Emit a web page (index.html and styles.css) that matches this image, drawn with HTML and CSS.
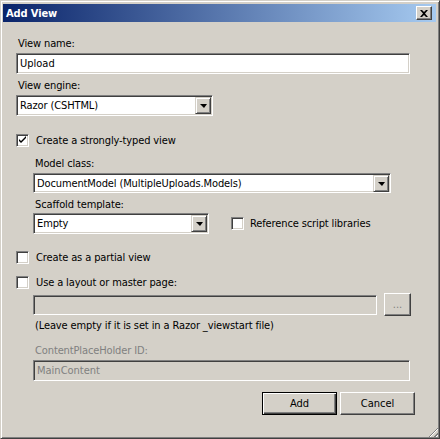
FILE: index.html
```html
<!DOCTYPE html>
<html>
<head>
    <title>Add View</title>
    <link rel="stylesheet" href="styles.css">
</head>
<body>
    <div class="dialog">
        <div class="titlebar">
            <span class="title">Add View</span>
            <button class="close-button" title="Close">
                <svg width="8" height="7" viewBox="0 0 8 7"><path d="M0 0h2l2 2 2-2h2L5 3.5 8 7H6L4 5 2 7H0l3-3.5z" fill="#000"/></svg>
            </button>
        </div>

        <div class="content">
            <div class="field-label">View name:</div>
            <input class="textbox" type="text" value="Upload">

            <div class="field-label gap-5">View engine:</div>
            <div class="combo combo-engine">
                <span class="combo-text">Razor (CSHTML)</span>
                <span class="combo-button"><span class="arrow"></span></span>
            </div>

            <div class="check-row row-typed">
                <span class="checkbox checked">
                    <svg width="9" height="9" viewBox="0 0 9 9"><path d="M1 3v2l2 2 5-5V0L3 5z" fill="#000"/></svg>
                </span>
                <span class="check-label">Create a strongly-typed view</span>
            </div>

            <div class="indent">
                <div class="field-label row-model">Model class:</div>
                <div class="combo combo-model">
                    <span class="combo-text">DocumentModel (MultipleUploads.Models)</span>
                    <span class="combo-button"><span class="arrow"></span></span>
                </div>

                <div class="field-label gap-5">Scaffold template:</div>
                <div class="scaffold-row">
                    <div class="combo combo-scaffold">
                        <span class="combo-text">Empty</span>
                        <span class="combo-button"><span class="arrow"></span></span>
                    </div>
                    <div class="check-row ref-libs">
                        <span class="checkbox"></span>
                        <span class="check-label">Reference script libraries</span>
                    </div>
                </div>
            </div>

            <div class="check-row row-partial">
                <span class="checkbox"></span>
                <span class="check-label">Create as a partial view</span>
            </div>

            <div class="check-row row-layout">
                <span class="checkbox"></span>
                <span class="check-label">Use a layout or master page:</span>
            </div>

            <div class="indent">
                <div class="layout-row">
                    <input class="textbox textbox-disabled textbox-layout" type="text" disabled>
                    <button class="button button-browse" disabled>...</button>
                </div>
                <div class="hint">(Leave empty if it is set in a Razor _viewstart file)</div>

                <div class="field-label label-disabled row-cph">ContentPlaceHolder ID:</div>
                <input class="textbox textbox-disabled textbox-cph" type="text" value="MainContent" disabled>
            </div>

            <div class="dialog-actions">
                <button class="button button-default">Add</button>
                <button class="button">Cancel</button>
            </div>
        </div>

        <div class="size-grip"></div>
    </div>
</body>
</html>
```

FILE: styles.css
```css
:root {
    --face: #d4d0c8;
    --shadow: #808080;
    --dark-shadow: #404040;
    --highlight: #ffffff;
    --disabled-text: #808080;
}

html, body {
    margin: 0;
    padding: 0;
    background: var(--face);
    font-family: 'DejaVu Sans Condensed', 'Liberation Sans', sans-serif;
    font-size: 11px;
    letter-spacing: -0.12px;
    color: #000;
}

* {
    box-sizing: border-box;
}

.dialog {
    position: relative;
    width: 440px;
    height: 439px;
    padding: 3px 3px 3px 2px;
    background: var(--face);
    border: 1px solid;
    border-color: var(--face) var(--dark-shadow) var(--dark-shadow) var(--face);
    box-shadow: inset 1px 1px var(--highlight), inset -1px -1px var(--shadow);
}

.titlebar {
    display: flex;
    align-items: center;
    justify-content: space-between;
    height: 18px;
    padding: 0 3px 0 3px;
    background: linear-gradient(to right, #0a246a, #a6caf0);
}

.title {
    color: #fff;
    font-weight: bold;
    font-size: 11px;
}

.close-button {
    display: flex;
    align-items: center;
    justify-content: center;
    width: 16px;
    height: 14px;
    padding: 0;
    margin-right: 1px;
    background: var(--face);
    border: 1px solid;
    border-color: var(--highlight) var(--dark-shadow) var(--dark-shadow) var(--highlight);
    box-shadow: inset -1px -1px var(--shadow);
}

.content {
    padding: 15px 21px 0 13px;
    display: flex;
    flex-direction: column;
    align-items: flex-start;
}

.field-label {
    height: 13px;
    line-height: 13px;
    margin-left: 2px;
}

.label-disabled {
    color: var(--disabled-text);
}

.gap-5 {
    margin-top: 5px;
}

.textbox {
    width: 394px;
    height: 21px;
    margin: 3px 0 0 0;
    padding: 0 3px;
    font: inherit;
    color: #000;
    background: #fff;
    border: 1px solid;
    border-color: var(--shadow) var(--highlight) var(--highlight) var(--shadow);
    box-shadow: inset 1px 1px var(--dark-shadow), inset -1px -1px var(--face);
    outline: none;
}

.textbox-disabled {
    background: var(--face);
    color: var(--disabled-text);
}

.combo {
    display: flex;
    align-items: center;
    height: 21px;
    margin-top: 3px;
    padding: 2px;
    background: #fff;
    border: 1px solid;
    border-color: var(--shadow) var(--highlight) var(--highlight) var(--shadow);
    box-shadow: inset 1px 1px var(--dark-shadow), inset -1px -1px var(--face);
}

.combo-text {
    flex: 1;
    padding-left: 1px;
    white-space: nowrap;
    overflow: hidden;
}

.combo-button {
    display: flex;
    align-items: center;
    justify-content: center;
    width: 16px;
    height: 17px;
    margin-right: -1px;
    background: var(--face);
    border: 1px solid;
    border-color: var(--face) var(--dark-shadow) var(--dark-shadow) var(--face);
    box-shadow: inset 1px 1px var(--highlight), inset -1px -1px var(--shadow);
}

.arrow {
    width: 0;
    height: 0;
    border-left: 4px solid transparent;
    border-right: 3px solid transparent;
    border-top: 4px solid #000;
    margin-top: 1px;
}

.combo-engine {
    width: 197px;
}

.combo-model {
    width: 358px;
    height: 20px;
}

.combo-scaffold {
    width: 176px;
    margin-top: 0;
}

.check-row {
    display: flex;
    align-items: center;
    height: 13px;
}

.checkbox {
    display: flex;
    align-items: center;
    justify-content: center;
    width: 13px;
    height: 13px;
    background: #fff;
    border: 1px solid;
    border-color: var(--shadow) var(--highlight) var(--highlight) var(--shadow);
    box-shadow: inset 1px 1px var(--dark-shadow), inset -1px -1px var(--face);
}

.check-label {
    margin-left: 7px;
}

.row-typed {
    margin-top: 18px;
}

.indent {
    display: flex;
    flex-direction: column;
    align-items: flex-start;
    margin-left: 17px;
}

.row-model {
    margin-top: 10px;
}

.scaffold-row {
    display: flex;
    align-items: center;
    margin-top: 2px;
}

.ref-libs {
    margin-left: 22px;
}

.ref-libs .check-label {
    margin-left: 6px;
}

.row-partial {
    margin-top: 17px;
}

.row-layout {
    margin-top: 12px;
}

.layout-row {
    display: flex;
    align-items: center;
    margin-top: 4px;
}

.textbox-layout {
    width: 344px;
    height: 20px;
    margin: 0;
}

.hint {
    height: 13px;
    line-height: 13px;
    margin: 3px 0 0 2px;
}

.row-cph {
    margin-top: 12px;
}

.textbox-cph {
    width: 377px;
}

.button {
    width: 75px;
    height: 23px;
    padding: 0;
    font: inherit;
    color: #000;
    background: var(--face);
    border: 1px solid;
    border-color: var(--highlight) var(--dark-shadow) var(--dark-shadow) var(--highlight);
    box-shadow: inset -1px -1px var(--shadow), inset 1px 1px var(--face);
}

.button:disabled {
    color: var(--disabled-text);
}

.button-browse {
    width: 27px;
    margin-left: 7px;
}

.button-default {
    border: 1px solid #000;
    box-shadow: inset 1px 1px var(--highlight), inset -1px -1px var(--dark-shadow), inset -2px -2px var(--shadow);
}

.dialog-actions {
    display: flex;
    gap: 3px;
    align-self: flex-end;
    margin-top: 11px;
    margin-right: 0;
}

.size-grip {
    position: absolute;
    right: 1px;
    bottom: 1px;
    width: 12px;
    height: 12px;
    background: repeating-linear-gradient(135deg, transparent 0 2px, var(--shadow) 2px 3px, var(--highlight) 3px 4px);
    clip-path: polygon(100% 0, 100% 100%, 0 100%);
}
```
